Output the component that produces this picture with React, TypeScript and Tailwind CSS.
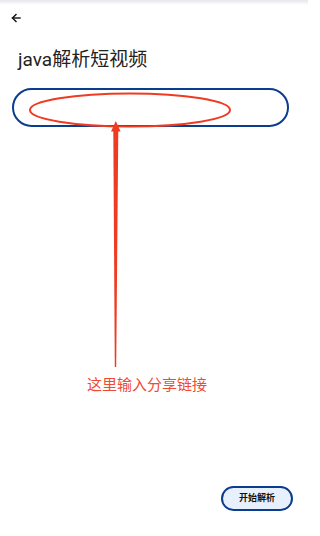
export default function App() {
  return (
    <div className="relative w-[308px] h-[536px] bg-white flex flex-col overflow-hidden" style={{ fontFamily: 'Roboto, "Noto Sans CJK SC", sans-serif' }}>
      <div className="h-[5px] bg-gradient-to-b from-gray-200 to-white" />

      <div className="pl-[11px] pt-[8px] h-[16px]">
        <svg width="10" height="10" viewBox="0 0 10 10" fill="none" stroke="#111" strokeWidth="1.4" strokeLinecap="square">
          <path d="M9 5H1.5" />
          <path d="M5 1.5L1.5 5L5 8.5" />
        </svg>
      </div>

      <h1 className="mt-[27px] ml-[18px] text-[19px] leading-[23px] text-[#222]">java解析短视频</h1>

      <div className="mt-[17px] ml-[12px] w-[277px] h-[39px] rounded-full border-[2.5px] border-[#0b3d8f]" />

      <div className="flex-1" />

      <div className="flex justify-end pr-[15px] pb-[25px]">
        <button className="w-[72px] h-[25px] rounded-full border-2 border-[#0b3d8f] bg-[#e8f0fd] text-[9px] font-semibold text-[#111]">
          开始解析
        </button>
      </div>

      <svg className="absolute left-0 top-0 pointer-events-none" width="308" height="536" viewBox="0 0 308 536">
        <ellipse cx="130" cy="110" rx="100" ry="16.5" fill="none" stroke="#ee3b22" strokeWidth="2" />
        <polygon points="113.3,130 118.3,130 116.2,367 114.8,367" fill="#ee3b22" />
        <polygon points="115.8,121 111,131.5 120.6,131.5" fill="#ee3b22" />
      </svg>

      <div className="absolute left-[87px] top-[375px] text-[15px] leading-[20px] text-[#f04a33]">这里输入分享链接</div>
    </div>
  );
}
